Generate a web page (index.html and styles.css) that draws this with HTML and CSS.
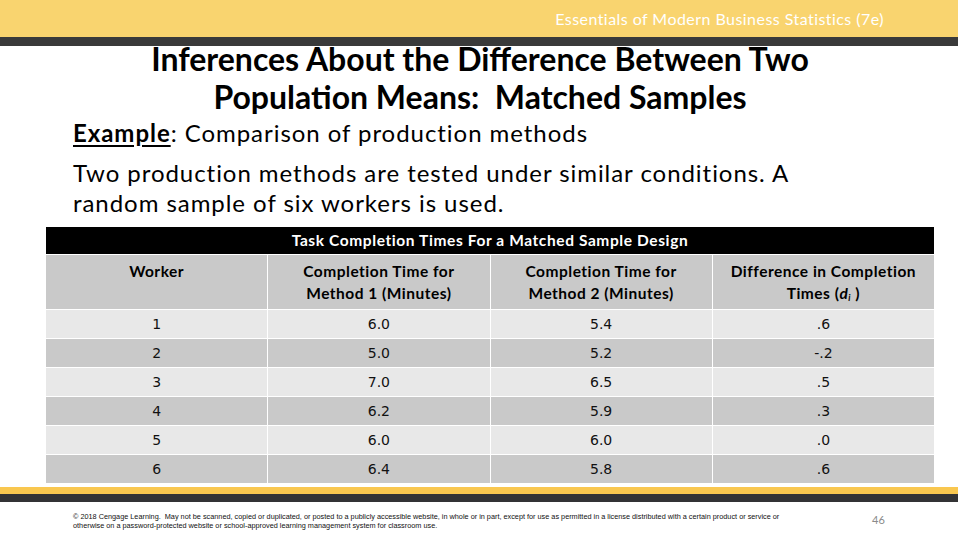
FILE: index.html
```html
<!DOCTYPE html>
<html lang="en">
<head>
<meta charset="utf-8">
<title>Inferences About the Difference Between Two Population Means: Matched Samples</title>
<link rel="stylesheet" href="styles.css">
</head>
<body>
<div class="slide">
  <header class="topbar">
    <span class="course">Essentials of Modern Business Statistics (7e)</span>
  </header>
  <div class="topbar-rule"></div>

  <main class="content">
    <h1 class="title">Inferences About the Difference Between Two<br>Population Means:&nbsp; Matched Samples</h1>
    <p class="example"><span class="example-label">Example</span>: Comparison of production methods</p>
    <p class="desc">Two production methods are tested under similar conditions. A<br>random sample of six workers is used.</p>

    <table class="data">
      <thead>
        <tr><th class="caption" colspan="4">Task Completion Times For a Matched Sample Design</th></tr>
        <tr class="head">
          <th>Worker</th>
          <th>Completion Time for<br>Method 1 (Minutes)</th>
          <th>Completion Time for<br>Method 2 (Minutes)</th>
          <th>Difference in Completion<br>Times (<i>d<sub>i</sub></i> )</th>
        </tr>
      </thead>
      <tbody>
        <tr class="light"><td>1</td><td>6.0</td><td>5.4</td><td>.6</td></tr>
        <tr class="dark"><td>2</td><td>5.0</td><td>5.2</td><td>-.2</td></tr>
        <tr class="light"><td>3</td><td>7.0</td><td>6.5</td><td>.5</td></tr>
        <tr class="dark"><td>4</td><td>6.2</td><td>5.9</td><td>.3</td></tr>
        <tr class="light"><td>5</td><td>6.0</td><td>6.0</td><td>.0</td></tr>
        <tr class="dark"><td>6</td><td>6.4</td><td>5.8</td><td>.6</td></tr>
      </tbody>
    </table>
  </main>

  <div class="bottom-yellow"></div>
  <div class="bottom-dark"></div>

  <footer class="footer">
    <p class="copyright">© 2018 Cengage Learning.&nbsp; May not be scanned, copied or duplicated, or posted to a publicly accessible website, in whole or in part, except for use as permitted in a license distributed with a certain product or service or<br>otherwise on a password-protected website or school-approved learning management system for classroom use.</p>
    <span class="page-num">46</span>
  </footer>
</div>
</body>
</html>
```

FILE: styles.css
```css
html, body {
  margin: 0;
  padding: 0;
  background: #ffffff;
}

.slide {
  width: 958px;
  height: 540px;
  overflow: hidden;
  font-family: Lato, "Open Sans", sans-serif;
  color: #000;
}

.topbar {
  height: 37px;
  background: #f9d46f;
  display: flex;
  justify-content: flex-end;
  align-items: center;
  padding-right: 74px;
}

.course {
  color: #ffffff;
  font-size: 16px;
  letter-spacing: 0.45px;
}

.topbar-rule {
  height: 9px;
  background: #3a3a3a;
}

.content {
  padding: 0 24px 0 46px;
}

.title {
  margin: -6px 0 0 0;
  font-size: 32px;
  line-height: 38px;
  font-weight: 700;
  text-align: center;
  letter-spacing: 0;
  padding-right: 20px;
}

.example {
  margin: 3px 0 0 27px;
  font-size: 24px;
  line-height: 28px;
  letter-spacing: 0.95px;
}

.example-label {
  font-weight: 700;
  text-decoration: underline;
  text-underline-offset: 3px;
}

.desc {
  margin: 11px 0 0 27px;
  font-size: 24px;
  line-height: 30px;
  letter-spacing: 0.95px;
}

.data {
  margin-top: 8px;
  margin-left: -1px;
  width: 890px;
  border-collapse: collapse;
  table-layout: fixed;
}

.data th,
.data td {
  border: 1px solid #ffffff;
  text-align: center;
  padding: 0;
}

.data .caption {
  background: #000000;
  color: #ffffff;
  font-size: 15.5px;
  font-weight: 700;
  letter-spacing: 0.6px;
  height: 27px;
  line-height: 27px;
}

.data .head th {
  background: #c9c9c9;
  font-size: 15.5px;
  font-weight: 700;
  letter-spacing: 0.5px;
  line-height: 22px;
  height: 55px;
  vertical-align: top;
  padding-top: 5px;
  box-sizing: border-box;
}

.data .head sub {
  font-size: 9px;
  vertical-align: -2px;
}

.data td {
  height: 28px;
  font-family: "DejaVu Sans", Verdana, sans-serif;
  font-size: 14px;
  color: #111;
}

.data tr.light td {
  background: #e8e8e8;
}

.data tr.dark td {
  background: #c9c9c9;
}

.bottom-yellow {
  margin-top: 3px;
  height: 7px;
  background: #f9c74f;
}

.bottom-dark {
  height: 8px;
  background: #333335;
}

.footer {
  display: flex;
  align-items: flex-start;
  padding: 11px 0 0 73px;
}

.copyright {
  margin: 0;
  width: 790px;
  font-family: "Liberation Sans", Arial, sans-serif;
  font-size: 7.3px;
  line-height: 8.5px;
  color: #111;
}

.page-num {
  margin-left: 9px;
  margin-top: 0;
  font-size: 11px;
  color: #8a8a8a;
}
```
